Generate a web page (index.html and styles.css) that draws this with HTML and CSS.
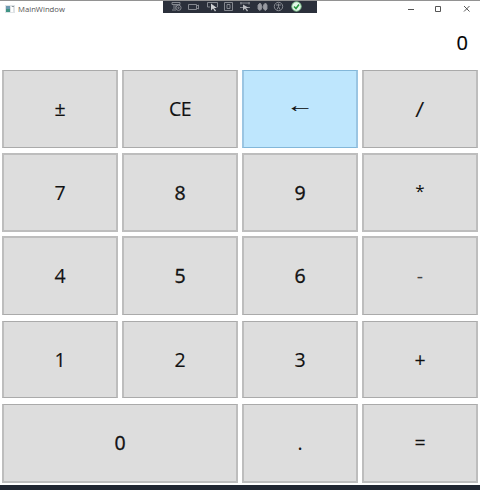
FILE: index.html
```html
<!DOCTYPE html>
<html lang="en">
<head>
<meta charset="utf-8">
<title>MainWindow</title>
<link rel="stylesheet" href="styles.css">
</head>
<body>
<div class="window">
  <header class="titlebar">
    <svg class="app-icon" width="10" height="8" viewBox="0 0 10 8"><path fill="#dfe3e6" d="M0 0h10v8H0z"/><path fill="#6d99b0" d="M1 1h4v3H1z"/><path fill="#3f9484" d="M1 4h4v3H1z"/><path fill="#fff" d="M6 2h2v5H6z"/><path fill="#8d979c" d="M7 1h2v1H7z"/></svg>
    <span class="title">MainWindow</span>
    <svg class="controls" width="64" height="10" viewBox="0 0 64 10" fill="none" stroke="#555"><path d="M2 5.500h6"/><path d="M29.500 2.500h5v5h-5z"/><path d="M58 2l5.500 5.500M63.500 2L58 7.500"/></svg>
  </header>
  <div class="debugbar">
    <svg width="154" height="13" viewBox="0 0 154 13" fill="none" stroke="#8f9298" stroke-width=".9">
      <path d="M9 2.500h8v2H9zM10 6h4M10 8h3M9 10h4"/><circle cx="15.500" cy="7.800" r="2.600"/><circle cx="15.500" cy="7.800" r=".7"/>
      <path d="M25.500 4.500h8v5h-8zM33.500 6l2-1v4l-2-1"/>
      <path d="M47 7h-2.500V2.500h10V7H54"/><path d="M48 3.500v7l2-2 2 3 1-1-2-2.500h3z" fill="#ced0d3" stroke="none"/>
      <path d="M61.500 2.500h8v8h-8zM64 4.500h3v4h-3z"/>
      <path d="M77 3h10M78 2v2.500M86 2v2.500M77 7.500h3M84 7.500h3"/><path d="M80 4.500v6l2-2 2 3 1-1-2-2.500h3z" fill="#bbbdc1" stroke="none"/>
      <path d="M95 5l2-2 1.500 2v4L97 10.500 95 9zM100.500 5l2-2 1.500 2v4l-1.500 1.500-2-1.500zM98 7h3" fill="#999ba1"/>
      <circle cx="115.500" cy="6.500" r="4.200"/><path d="M113 5h5M115.500 3.500v3l-1.500 3M115.500 6.500l1.500 3"/>
      <circle cx="133.500" cy="6.500" r="4.700" fill="#e4f7e8" stroke="#82ca91"/><path stroke="#299a40" stroke-width="1.600" d="M131 6.500l2 2 3-4"/>
    </svg>
  </div>
  <div class="display">0</div>
  <main class="keys">
    <button class="key row-first">±</button><button class="key row-first"><span class="clear">CE</span></button><button class="key row-first active"><span class="arrow">←</span></button><button class="key row-first"><span class="slash">/</span></button>
    <button class="key row-second">7</button><button class="key row-second medium">8</button><button class="key row-second medium">9</button><button class="key row-second"><span class="star">*</span></button>
    <button class="key row-third">4</button><button class="key row-third medium">5</button><button class="key row-third medium">6</button><button class="key row-third minus">-</button>
    <button class="key row-fourth">1</button><button class="key row-fourth">2</button><button class="key row-fourth">3</button><button class="key row-fourth">+</button>
    <button class="key row-fifth wide medium">0</button><button class="key row-fifth">.</button><button class="key row-fifth">=</button>
  </main>
  <footer class="taskbar"></footer>
</div>
</body>
</html>
```
FILE: styles.css
```css
* { box-sizing: border-box; }
body { margin: 0; background: #fff; font-family: "Open Sans", "Noto Sans", sans-serif; }
.window { position: relative; width: 480px; height: 490px; display: flex; flex-direction: column; overflow: hidden; border-top: 1px solid #929292; }
.titlebar { height: 17px; flex: none; display: flex; align-items: center; padding: 0 10px 1px 5px; }
.app-icon { flex: none; }
.title { margin-left: 3px; font-size: 7.7px; line-height: 12px; color: #555; }
.controls { margin-left: auto; }
.debugbar { position: absolute; top: -1px; left: 163px; width: 154px; height: 13px; background: #2b303b; }
.debugbar svg { display: block; }
.display { height: 52px; flex: none; padding-right: 12px; text-align: right; font-size: 20px; line-height: 50px; color: #000; -webkit-text-stroke: .2px #000; }
.keys { flex: none; display: grid; grid-template-columns: repeat(4, 116px); grid-template-rows: 83px 83px 85px 83px 79px; column-gap: 4px; padding: 0 2px; }
.key { width: 100%; margin: 0; padding: 0; display: flex; align-items: center; justify-content: center; border: solid #bdbdbd; border-width: 1px 2px; background: #ddd; color: #111; font: 400 19.5px/26px "Open Sans", "Noto Sans", sans-serif; -webkit-text-stroke: .15px #111; }
.row-first { height: 78px; border-top-color: #aaa; border-bottom-color: #aaa; }
.row-second { height: 79px; border-width: 2px; }
.row-third { height: 79px; border-width: 2px 2px 1px; border-bottom-color: #aaa; }
.row-fourth { height: 77px; border-top-color: #aaa; border-bottom-color: #aaa; }
.row-fifth { height: 79px; border-width: 1px 2px 2px; border-top-color: #aaa; }
.active { background: #bee6fd; border-color: #83b7d9 #9bc5e2; }
.wide { grid-column: span 2; }
.medium { -webkit-text-stroke: .35px #111; }
.minus { color: #444; -webkit-text-stroke: 0; }
.clear { letter-spacing: -.6px; }
.arrow { font: 20px/26px "Liberation Sans", sans-serif; transform: translateY(-4px) scaleX(1.4); }
.slash { font-size: 21px; transform: skewX(-5deg); }
.star { font-size: 17px; line-height: 22px; transform: translateY(-2px); -webkit-text-stroke: 0; }
.taskbar { height: 5px; margin-top: 2px; flex: none; background: #202631; }
```
